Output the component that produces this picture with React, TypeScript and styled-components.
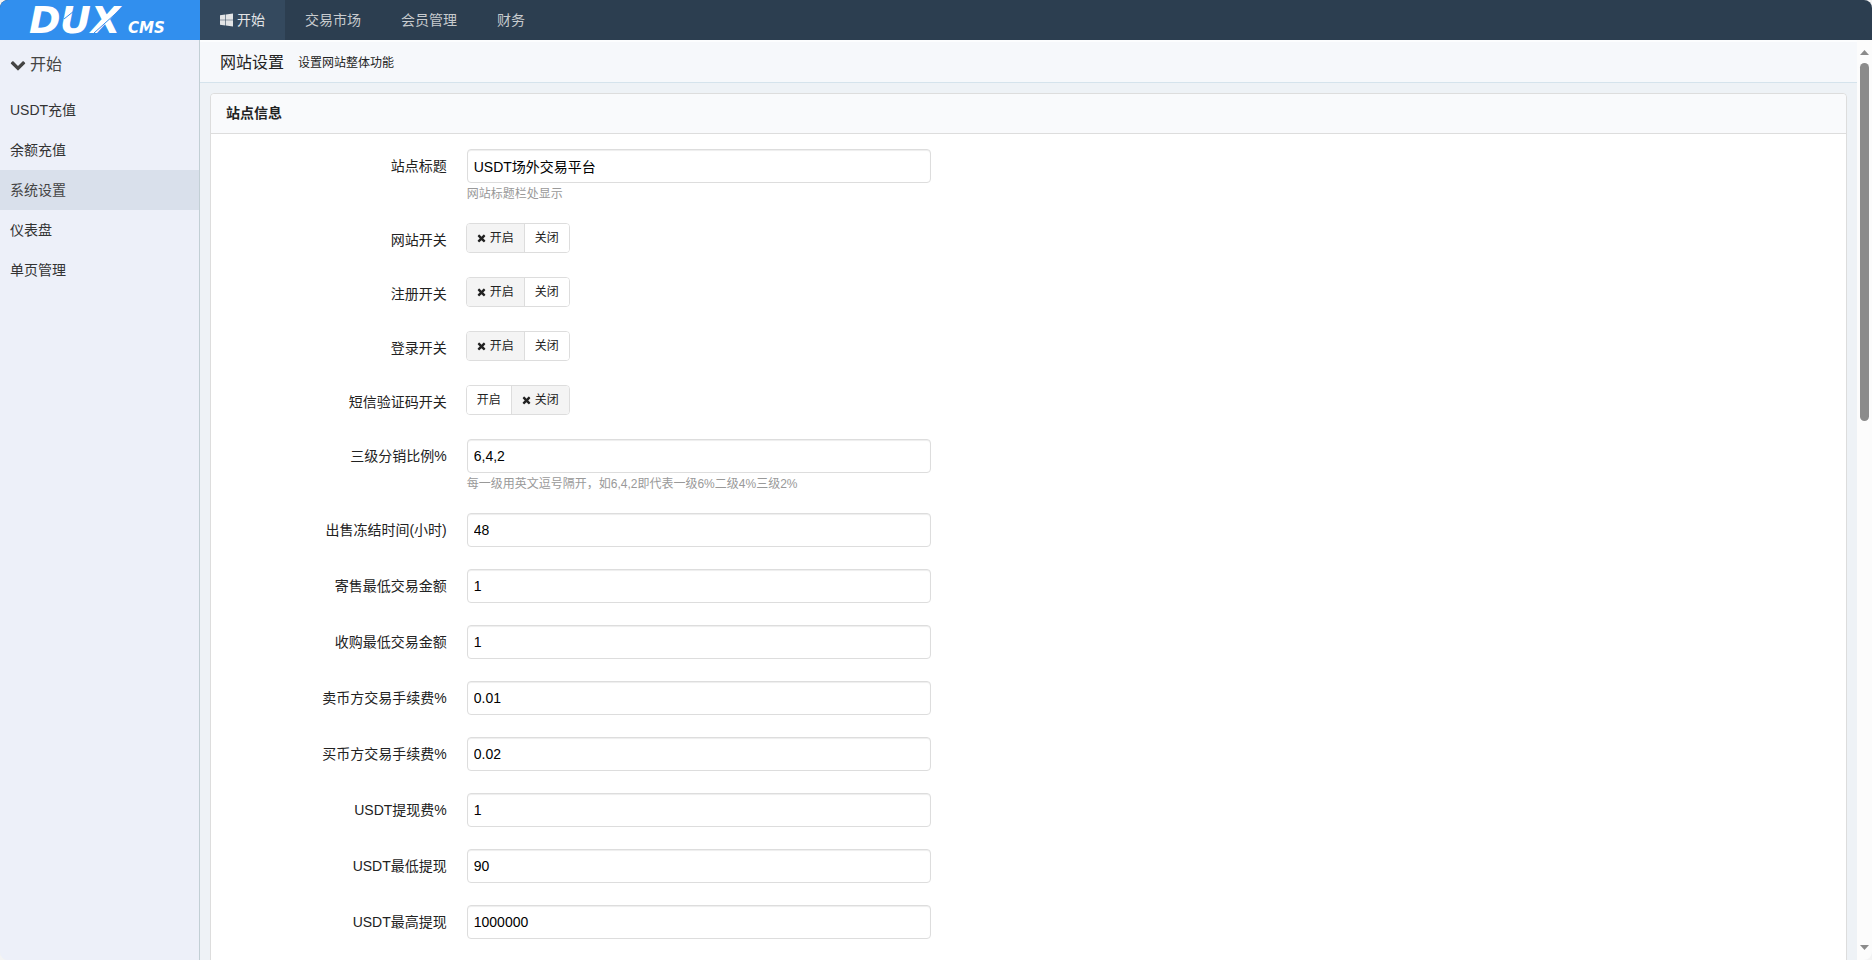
import React, { useId, useState } from 'react';
import styled, { createGlobalStyle } from 'styled-components';

const GlobalStyle = createGlobalStyle`
  *, *::before, *::after { box-sizing: border-box; }
  body {
    margin: 0;
    background: #f4f4f4;
    color: #222;
    font: 14px/20px "Liberation Sans", "Noto Sans CJK SC", sans-serif;
  }
  h1, h2, p, ul { margin: 0; padding: 0; font-weight: 400; }
  ul { list-style: none; }
  a { color: inherit; text-decoration: none; }
  input, button { font: inherit; }
`;

const Shell = styled.div`
  display: flex;
  flex-direction: column;
  height: 100vh;
  overflow: hidden;
  border-radius: 8px;
  background: #eef2f6;
`;

const TopBar = styled.header`
  display: flex;
  flex: none;
  height: 40px;
  background: #2c3e50;
`;

const Brand = styled.a`
  display: block;
  width: 200px;
  height: 40px;
  background: #318fee;
`;

const LogoMark = styled.svg`
  display: block;
  overflow: visible;
`;

const NavLink = styled.a<{ $active?: boolean }>`
  display: flex;
  align-items: center;
  gap: 4px;
  height: 40px;
  padding: 0 20px;
  color: ${(p) => (p.$active ? '#e2e4e6' : '#c8cbce')};
  background: ${(p) => (p.$active ? '#34495e' : 'transparent')};
`;

const TopNav = styled.nav`
  display: flex;
`;

const Columns = styled.div`
  display: flex;
  flex: 1;
  min-height: 0;
`;

const Sidebar = styled.aside`
  flex: none;
  width: 200px;
  border-right: 1px solid #c2cfd5;
  background: #edf0f9;
`;

const GroupButton = styled.button`
  display: flex;
  align-items: center;
  gap: 4px;
  width: 100%;
  height: 50px;
  padding: 0 10px;
  border: 0;
  background: none;
  color: #444;
  font-size: 16px;
  text-align: left;
`;

const SideLink = styled.a<{ $active?: boolean }>`
  display: block;
  padding: 0 10px;
  line-height: 40px;
  color: ${(p) => (p.$active ? '#444' : '#333')};
  background: ${(p) => (p.$active ? '#d9e0eb' : 'transparent')};
`;

const Main = styled.main`
  flex: 1;
  min-width: 0;
  overflow: hidden;
`;

const TitleBar = styled.div`
  display: flex;
  align-items: center;
  gap: 14px;
  height: 43px;
  padding: 2px 20px 0;
  border-top: 2px solid #fcfdfe;
  border-bottom: 1px solid #d5e3ec;
  background: #f6f8fb;
`;

const PageTitle = styled.h1`
  font-size: 16px;
`;

const PageNote = styled.p`
  font-size: 12px;
`;

const Panel = styled.section`
  margin: 10px;
  border: 1px solid #ddd;
  border-radius: 4px;
  background: #fff;
`;

const PanelTitle = styled.h2`
  padding: 0 15px;
  border-bottom: 1px solid #ddd;
  border-radius: 4px 4px 0 0;
  background: #f9fafc;
  font-size: 14px;
  font-weight: 700;
  line-height: 39px;
`;

const Form = styled.form`
  padding: 15px;
`;

const Row = styled.div`
  display: grid;
  grid-template-columns: 15% 85%;
  margin-bottom: 20px;
`;

const RowLabel = styled.label`
  padding-right: 20px;
  line-height: 34px;
  text-align: right;
`;

const TextInput = styled.input`
  display: block;
  width: 34%;
  height: 34px;
  margin-bottom: 2px;
  padding: 0 6px;
  border: 1px solid #ddd;
  border-radius: 4px;
  background: #fff;
  box-shadow: inset 0 1px 1px #eee;
  color: #000;
  outline: none;
`;

const Hint = styled.p`
  color: #999;
  font-size: 12px;
  line-height: 18px;
`;

const Segments = styled.div`
  display: flex;
  width: max-content;
  height: 30px;
  margin-left: -1px;
  border: 1px solid #ddd;
  border-radius: 4px;
  overflow: hidden;
`;

const Segment = styled.label<{ $on: boolean }>`
  display: flex;
  gap: 4px;
  align-items: center;
  padding: 0 10px;
  background: ${(p) => (p.$on ? '#f4f4f4' : '#fff')};
  font-size: 12px;
  & + & { border-left: 1px solid #ddd; }
`;

const HiddenRadio = styled.input`
  position: absolute;
  width: 1px;
  height: 1px;
  margin: 0;
  appearance: none;
  opacity: 0;
`;

const ScrollRail = styled.div`
  display: flex;
  flex: none;
  flex-direction: column;
  align-items: center;
  width: 15px;
  padding: 10px 0;
  background: #fcfcfc;
  svg { display: block; flex: none; }
`;

const ScrollTrack = styled.div`
  flex: 1;
  width: 9px;
  margin: 8px 0;
`;

const ScrollThumb = styled.div`
  height: 41%;
  border-radius: 5px;
  background: #8b8b8b;
`;

const WindowsIcon = () => (
  <svg width="13" height="14" viewBox="0 0 1664 1792" fill="currentColor" aria-hidden="true">
    <path d="M682 942v651l-682-94v-557h682zm0-743v659h-682v-565zm982 743v786l-907-125v-661h907zm0-878v794h-907v-669z" />
  </svg>
);

const ChevronIcon = () => (
  <svg width="16" height="16" viewBox="0 64 1792 1792" fill="currentColor" aria-hidden="true">
    <path d="M1683 808l-742 741q-19 19-45 19t-45-19l-742-741q-19-19-19-45.5t19-45.5l166-165q19-19 45-19t45 19l531 531 531-531q19-19 45-19t45 19l166 165q19 19 19 45.5t-19 45.5z" />
  </svg>
);

const CrossIcon = () => (
  <svg width="9" height="12" viewBox="192 0 1408 1792" fill="currentColor" aria-hidden="true">
    <path d="M1490 1322q0 40-28 68l-136 136q-28 28-68 28t-68-28l-294-294-294 294q-28 28-68 28t-68-28l-136-136q-28-28-28-68t28-68l294-294-294-294q-28-28-28-68t28-68l136-136q28-28 68-28t68 28l294 294 294-294q28-28 68-28t68 28l136 136q28 28 28 68t-28 68l-294 294 294 294q28 28 28 68z" />
  </svg>
);

const Logo = () => (
  <LogoMark width="200" height="40" viewBox="0 0 200 40" fill="#fff" role="img" aria-label="DUX CMS">
    <g fontFamily="DejaVu Sans, sans-serif" fontWeight="700" fontStyle="italic">
      <text x="29 60 91" y="33" fontSize="38">DUX</text>
      <text x="128" y="33" fontSize="15">CMS</text>
    </g>
    <path d="M84 3 64 19M124 6 94 33" stroke="#318fee" strokeWidth="1" fill="none" />
  </LogoMark>
);

function TextRow({ label, value, hint }: { label: string; value: string; hint?: string }) {
  const id = useId();
  return (
    <Row>
      <RowLabel htmlFor={id}>{label}</RowLabel>
      <div>
        <TextInput id={id} type="text" defaultValue={value} />
        {hint && <Hint>{hint}</Hint>}
      </div>
    </Row>
  );
}

function SwitchRow({ label, initial }: { label: string; initial: string }) {
  const id = useId();
  const [value, setValue] = useState(initial);
  return (
    <Row role="radiogroup" aria-labelledby={id}>
      <RowLabel as="span" id={id}>{label}</RowLabel>
      <Segments>
        {['开启', '关闭'].map((option) => (
          <Segment key={option} $on={option === value}>
            <HiddenRadio
              type="radio"
              name={id + 'choice'}
              checked={option === value}
              onChange={() => setValue(option)}
            />
            {option === value && <CrossIcon />}
            {option}
          </Segment>
        ))}
      </Segments>
    </Row>
  );
}

const sideItems = ['USDT充值', '余额充值', '系统设置', '仪表盘', '单页管理'];

const amounts = [
  ['出售冻结时间(小时)', '48'],
  ['寄售最低交易金额', '1'],
  ['收购最低交易金额', '1'],
  ['卖币方交易手续费%', '0.01'],
  ['买币方交易手续费%', '0.02'],
  ['USDT提现费%', '1'],
  ['USDT最低提现', '90'],
  ['USDT最高提现', '1000000'],
];

export default function App() {
  return (
    <>
      <GlobalStyle />
      <Shell>
        <TopBar>
          <Brand href="#"><Logo /></Brand>
          <TopNav>
            <NavLink href="#" $active><WindowsIcon />开始</NavLink>
            <NavLink href="#">交易市场</NavLink>
            <NavLink href="#">会员管理</NavLink>
            <NavLink href="#">财务</NavLink>
          </TopNav>
        </TopBar>
        <Columns>
          <Sidebar>
            <GroupButton type="button"><ChevronIcon />开始</GroupButton>
            <ul>
              {sideItems.map((item) => (
                <li key={item}>
                  <SideLink href="#" $active={item === '系统设置'}>{item}</SideLink>
                </li>
              ))}
            </ul>
          </Sidebar>
          <Main>
            <TitleBar>
              <PageTitle>网站设置</PageTitle>
              <PageNote>设置网站整体功能</PageNote>
            </TitleBar>
            <Panel>
              <PanelTitle>站点信息</PanelTitle>
              <Form>
                <TextRow label="站点标题" value="USDT场外交易平台" hint="网站标题栏处显示" />
                <SwitchRow label="网站开关" initial="开启" />
                <SwitchRow label="注册开关" initial="开启" />
                <SwitchRow label="登录开关" initial="开启" />
                <SwitchRow label="短信验证码开关" initial="关闭" />
                <TextRow
                  label="三级分销比例%"
                  value="6,4,2"
                  hint="每一级用英文逗号隔开，如6,4,2即代表一级6%二级4%三级2%"
                />
                {amounts.map(([label, value]) => (
                  <TextRow key={label} label={label} value={value} />
                ))}
              </Form>
            </Panel>
          </Main>
          <ScrollRail aria-hidden="true">
            <svg width="9" height="5" viewBox="0 0 9 5" fill="#8b8b8b"><path d="M4.500 0 9 5H0z" /></svg>
            <ScrollTrack><ScrollThumb /></ScrollTrack>
            <svg width="9" height="5" viewBox="0 0 9 5" fill="#8b8b8b"><path d="M0 0h9L4.500 5z" /></svg>
          </ScrollRail>
        </Columns>
      </Shell>
    </>
  );
}
